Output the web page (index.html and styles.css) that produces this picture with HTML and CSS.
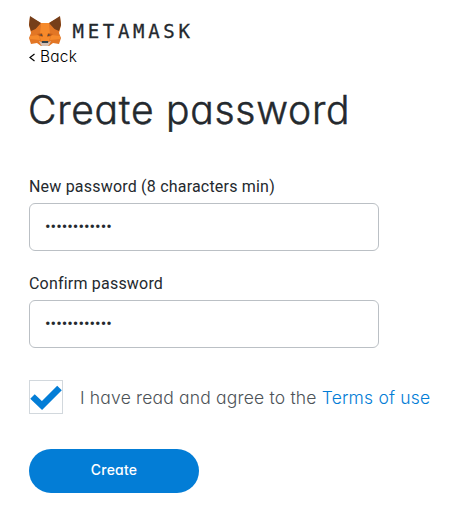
FILE: index.html
```html
<!DOCTYPE html>
<html lang="en">
<head>
<meta charset="utf-8">
<title>MetaMask</title>
<link rel="stylesheet" href="styles.css">
</head>
<body>
<main class="page">
  <header class="brand">
    <svg class="fox" viewBox="0 0 32 30" aria-hidden="true">
      <path fill="#e27625" d="M1 1 12 7h8L31 1l1 8-2 8 2 5-2 6-6-1-4 3h-8l-4-3-6 1-2-6 2-5-2-8z"/>
      <path fill="#f68a2b" d="M12 7h8l2 11-2 7h-8l-2-7zM1 20l9-1 1 5-10-1zM31 20l-9-1-1 5 10-1z"/>
      <path fill="#763e1a" d="M1 0l11 7-3 5-7 3-2-6zM31 0 20 7l3 5 7 3 2-6z"/>
      <path fill="#e27625" d="M12 7 3 17l8 2zM20 7l9 10-8 2z"/>
      <path fill="#cd6116" d="M8 18l5-1 1 4-4-1zM24 18l-5-1-1 4 4-1z"/>
      <path fill="#354249" d="M10 19l3-.8.5 1.800zM22 19l-3-.8-.5 1.800zM13 25h6l.5 2h-7z"/>
      <path fill="#d5bfb2" d="M10 25l2.500 1 .5 1h6l.5-1 2.500-1-2 4-1 1h-6l-1-1z"/>
    </svg>
    <span class="wordmark">METAMASK</span>
  </header>
  <a class="back"><svg class="chevron" viewBox="0 0 7 9" aria-hidden="true"><path d="M5.500 1 1 4.500 5.500 8" fill="none" stroke="#000" stroke-width="1.200"/></svg>Back</a>
  <h1 class="title">Create password</h1>
  <form class="form">
    <label class="label" for="new">New password (8 characters min)</label>
    <input class="field" id="new" type="password" value="abcdefghijkl">
    <label class="label label-confirm" for="confirm">Confirm password</label>
    <input class="field" id="confirm" type="password" value="abcdefghijkl">
    <div class="terms">
      <span class="checkbox"><svg viewBox="0 0 32 32" aria-hidden="true"><path d="M2.500 15.500 12 24.500 29.500 7" fill="none" stroke="#037dd6" stroke-width="6.500"/></svg></span>
      <span class="terms-text">I have read and agree to the <a class="link">Terms of use</a></span>
    </div>
    <button class="create" type="button">Create</button>
  </form>
</main>
</body>
</html>
```
FILE: styles.css
```css
* { box-sizing: border-box; }
body { margin: 0; background: #fff; color: #24292e; font-family: Inter, "Liberation Sans", sans-serif; font-feature-settings: "cv11"; }
.page { padding: 15px 0 0 29px; white-space: nowrap; }
.brand { display: flex; height: 32px; }
.fox { width: 32px; height: 30px; margin-top: 1px; flex: none; }
.wordmark { margin-left: 11.500px; font: 400 19px/32px "DejaVu Sans Mono", monospace; letter-spacing: 3.7px; -webkit-text-stroke: 0.3px #24292e; }
.back { display: flex; align-items: center; height: 20px; font-size: 15.500px; line-height: 20px; font-weight: 350; letter-spacing: 0.2px; color: #000; }
.chevron { width: 7px; height: 9px; margin-right: 4px; }
.title { margin: 15px 0 0 -1px; font-size: 39px; line-height: 56px; font-weight: 300; letter-spacing: 0.75px; -webkit-text-stroke: 0.5px #24292e; }
.form { margin-top: 38px; }
.label { display: block; font: 400 16px/22px Roboto, sans-serif; letter-spacing: 0.2px; color: #24292e; }
.label-confirm { margin-top: 22px; }
.field { display: block; width: 350px; height: 48px; margin-top: 5px; padding: 0 15px 1px; border: 1px solid #bbc0c5; border-radius: 6px; font: 400 16.500px Roboto, sans-serif; color: #24292e; outline: 0; }
.terms { display: flex; margin-top: 32px; height: 34px; }
.checkbox { width: 34px; height: 34px; border: 1px solid #d2d8dd; }
.checkbox svg { display: block; width: 32px; height: 32px; }
.terms-text { margin-left: 17px; font-size: 17.500px; line-height: 36px; font-weight: 350; letter-spacing: 0.18px; color: #4d5358; }
.link { color: #037dd6; }
.create { display: block; width: 170px; height: 44px; margin-top: 35px; padding: 0 0 2px; border: 0; border-radius: 22px; background: #037dd6; color: #fff; font: 500 14px/42px Inter, sans-serif; font-feature-settings: "cv11"; letter-spacing: 0.2px; }
```
